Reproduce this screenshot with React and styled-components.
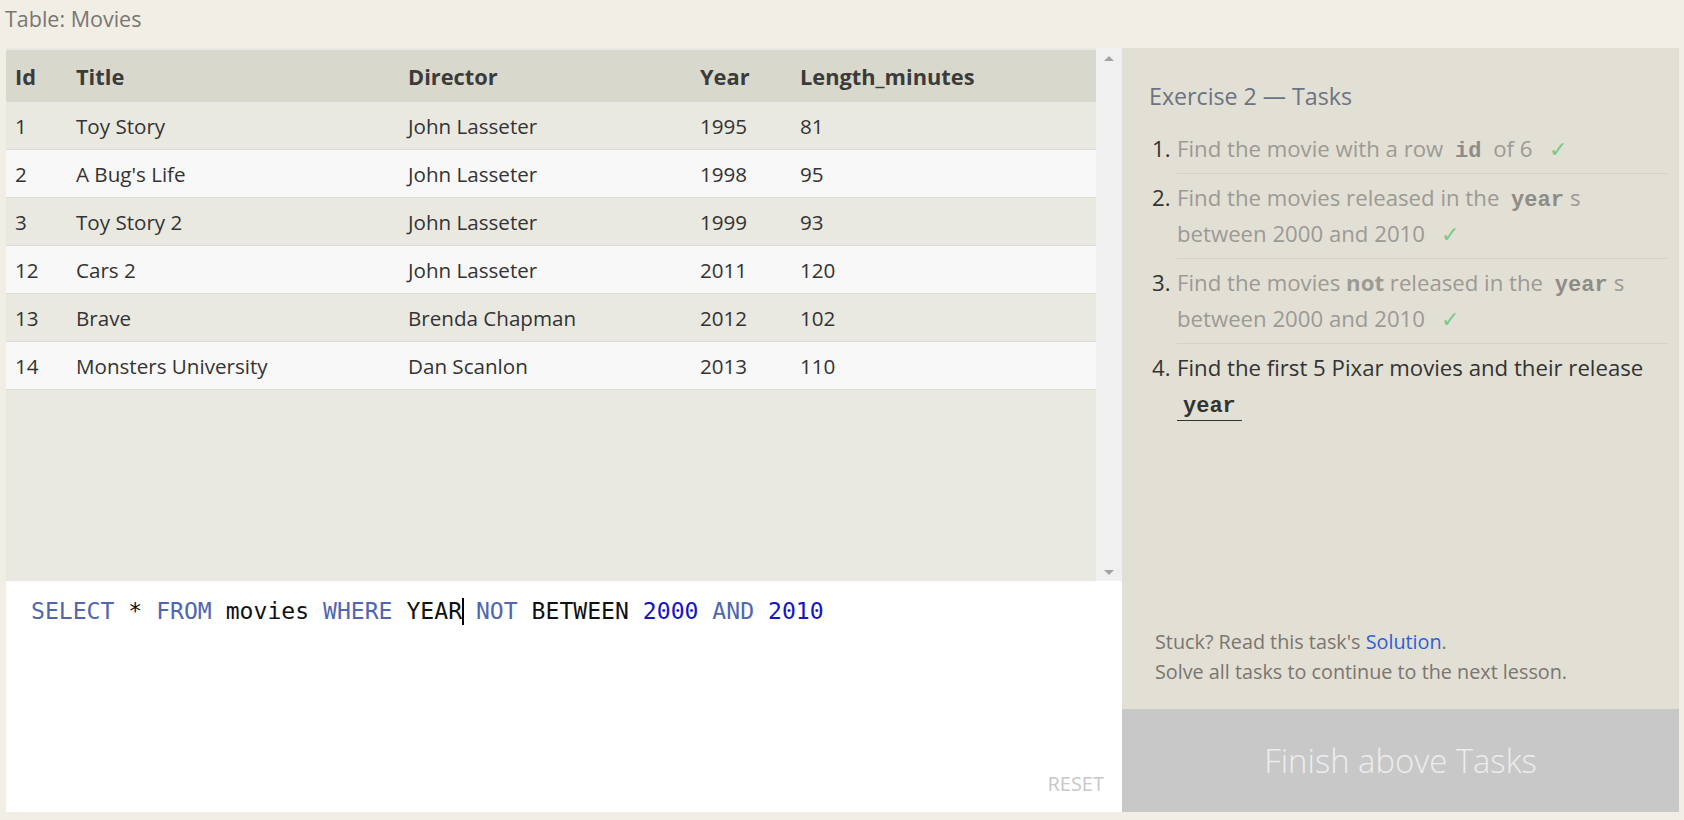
import React from "react";
import styled, { createGlobalStyle } from "styled-components";

const GlobalStyle = createGlobalStyle`
  html, body {
    margin: 0;
    padding: 0;
    background: #f1eee6;
  }
  body {
    font-family: "Open Sans", "Noto Sans", sans-serif;
    color: #333;
  }
`;

const movies = [
  { id: 1, title: "Toy Story", director: "John Lasseter", year: 1995, length: 81 },
  { id: 2, title: "A Bug's Life", director: "John Lasseter", year: 1998, length: 95 },
  { id: 3, title: "Toy Story 2", director: "John Lasseter", year: 1999, length: 93 },
  { id: 12, title: "Cars 2", director: "John Lasseter", year: 2011, length: 120 },
  { id: 13, title: "Brave", director: "Brenda Chapman", year: 2012, length: 102 },
  { id: 14, title: "Monsters University", director: "Dan Scanlon", year: 2013, length: 110 },
];

const columns = [
  { key: "id", label: "Id", width: 61 },
  { key: "title", label: "Title", width: 332 },
  { key: "director", label: "Director", width: 292 },
  { key: "year", label: "Year", width: 100 },
  { key: "length", label: "Length_minutes", width: 305 },
];

const Page = styled.div`
  display: flex;
  flex-direction: column;
  height: 820px;
  padding: 0 5px 8px 6px;
  box-sizing: border-box;
`;

const TableName = styled.div`
  height: 48px;
  padding-top: 5px;
  box-sizing: border-box;
  font-size: 21.5px;
  line-height: 28px;
  color: #7a7672;
  margin-left: -1px;
`;

const Main = styled.div`
  flex: 1;
  display: flex;
  min-height: 0;
`;

const LeftColumn = styled.div`
  width: 1116px;
  display: flex;
  flex-direction: column;
`;

const TableArea = styled.div`
  height: 533px;
  display: flex;
  background: #eae9e1;
`;

const TableScroll = styled.div`
  flex: 1;
  padding-top: 2px;
  overflow: hidden;
`;

const Table = styled.table`
  border-collapse: collapse;
  table-layout: fixed;
  width: 100%;
  font-size: 20.6px;
`;

const HeadCell = styled.th`
  height: 52px;
  padding: 0 0 0 9px;
  text-align: left;
  font-size: 21.8px;
  font-weight: 700;
  color: #3b3b3b;
  background: #d9d8cc;
`;

const Row = styled.tr`
  background: ${(p) => (p.$even ? "#f8f8f8" : "#eae9e1")};
  border-bottom: 1px solid #dcdbd4;
`;

const Cell = styled.td`
  height: 47px;
  padding: 0 0 0 9px;
  color: #333;
  white-space: nowrap;
`;

const Scrollbar = styled.div`
  width: 26px;
  background: #f0f0f0;
  display: flex;
  flex-direction: column;
  justify-content: space-between;
  align-items: center;
  padding: 8px 0 6px;
  box-sizing: border-box;
`;

const Arrow = styled.div`
  width: 0;
  height: 0;
  border-left: 5px solid transparent;
  border-right: 5px solid transparent;
  ${(p) =>
    p.$down
      ? "border-top: 5px solid #a3a3a3;"
      : "border-bottom: 5px solid #a3a3a3;"}
`;

const Editor = styled.div`
  flex: 1;
  background: #fff;
  display: flex;
  flex-direction: column;
  padding: 15px 18px 15px 25px;
  box-sizing: border-box;
`;

const Code = styled.div`
  font-family: "DejaVu Sans Mono", "Liberation Mono", monospace;
  font-size: 23.1px;
  line-height: 30px;
  color: #000;
  white-space: pre;
  flex: 1;
`;

const Token = styled.span`
  color: ${(p) => (p.$kind === "kw" ? "#5266b0" : p.$kind === "num" ? "#1414c8" : "#111")};
`;

const Caret = styled.span`
  display: inline-block;
  width: 0;
  height: 27px;
  border-left: 2px solid #000;
  margin-right: -2px;
  vertical-align: -6px;
`;

const ResetButton = styled.div`
  align-self: flex-end;
  font-size: 20px;
  color: #c8c8c8;
`;

const RightColumn = styled.div`
  flex: 1;
  display: flex;
  flex-direction: column;
  background: #e2dfd4;
`;

const TaskPanel = styled.div`
  flex: 1;
  padding: 33px 12px 0 30px;
`;

const TaskTitle = styled.div`
  font-size: 23.2px;
  line-height: 31px;
  color: #6b7384;
  margin: 0 0 13px -3px;
`;

const TaskList = styled.ol`
  list-style: none;
  margin: 0;
  padding: 0;
`;

const TaskItem = styled.li`
  display: flex;
  font-size: 22.2px;
  line-height: 36px;
`;

const TaskNum = styled.span`
  width: 25px;
  flex: none;
  padding-top: 6px;
  color: #333;
`;

const TaskBody = styled.div`
  flex: 1;
  padding: 6px 0;
  color: ${(p) => (p.$done ? "#9c9a94" : "#333")};
  border-bottom: ${(p) => (p.$last ? "none" : "1px solid #d4d1c6")};
`;

const InlineCode = styled.code`
  font-family: "Liberation Mono", "DejaVu Sans Mono", monospace;
  font-size: 22px;
  line-height: 1;
  font-weight: 700;
  padding: 0 6px;
  color: ${(p) => (p.$current ? "#333" : "#8e8c87")};
  ${(p) => (p.$current ? "border-bottom: 1px solid #333; padding-bottom: 1px;" : "")}
`;

const Check = styled.span`
  color: #78c98a;
  margin-left: 16px;
  line-height: 1;
`;

const Footer = styled.div`
  padding: 0 20px 22px 33px;
  font-size: 19.8px;
  line-height: 30px;
  color: #7a7570;
`;

const SolutionLink = styled.a`
  color: #2d5fd5;
  text-decoration: none;
`;

const FinishButton = styled.div`
  height: 103px;
  background: #c8c8c8;
  color: #ededed;
  font-size: 32.8px;
  font-weight: 300;
  display: flex;
  align-items: center;
  justify-content: center;
`;

const tokens = [
  ["kw", "SELECT"], ["", " * "], ["kw", "FROM"], ["", " movies "], ["kw", "WHERE"],
  ["", " YEAR"], ["caret", ""], ["", " "], ["kw", "NOT"], ["", " BETWEEN "],
  ["num", "2000"], ["", " "], ["kw", "AND"], ["", " "], ["num", "2010"],
];

export default function App() {
  return (
    <>
      <GlobalStyle />
      <Page>
        <TableName>Table: Movies</TableName>
        <Main>
          <LeftColumn>
            <TableArea>
              <TableScroll>
                <Table>
                  <colgroup>
                    {columns.map((c) => (
                      <col key={c.key} style={{ width: c.width }} />
                    ))}
                  </colgroup>
                  <thead>
                    <tr>
                      {columns.map((c) => (
                        <HeadCell key={c.key}>{c.label}</HeadCell>
                      ))}
                    </tr>
                  </thead>
                  <tbody>
                    {movies.map((m, i) => (
                      <Row key={m.id} $even={i % 2 === 1}>
                        {columns.map((c) => (
                          <Cell key={c.key}>{m[c.key]}</Cell>
                        ))}
                      </Row>
                    ))}
                  </tbody>
                </Table>
              </TableScroll>
              <Scrollbar>
                <Arrow />
                <Arrow $down />
              </Scrollbar>
            </TableArea>
            <Editor>
              <Code>
                {tokens.map(([kind, text], i) =>
                  kind === "caret" ? (
                    <Caret key={i} />
                  ) : (
                    <Token key={i} $kind={kind}>
                      {text}
                    </Token>
                  )
                )}
              </Code>
              <ResetButton>RESET</ResetButton>
            </Editor>
          </LeftColumn>
          <RightColumn>
            <TaskPanel>
              <TaskTitle>Exercise 2 — Tasks</TaskTitle>
              <TaskList>
                <TaskItem>
                  <TaskNum>1.</TaskNum>
                  <TaskBody $done>
                    Find the movie with a row <InlineCode>id</InlineCode> of 6
                    <Check>✓</Check>
                  </TaskBody>
                </TaskItem>
                <TaskItem>
                  <TaskNum>2.</TaskNum>
                  <TaskBody $done>
                    Find the movies released in the <InlineCode>year</InlineCode>s
                    between 2000 and 2010<Check>✓</Check>
                  </TaskBody>
                </TaskItem>
                <TaskItem>
                  <TaskNum>3.</TaskNum>
                  <TaskBody $done>
                    Find the movies <b>not</b> released in the{" "}
                    <InlineCode>year</InlineCode>s between 2000 and 2010
                    <Check>✓</Check>
                  </TaskBody>
                </TaskItem>
                <TaskItem>
                  <TaskNum>4.</TaskNum>
                  <TaskBody $last>
                    Find the first 5 Pixar movies and their release{" "}
                    <InlineCode $current>year</InlineCode>
                  </TaskBody>
                </TaskItem>
              </TaskList>
            </TaskPanel>
            <Footer>
              Stuck? Read this task's <SolutionLink href="#">Solution</SolutionLink>.
              <br />
              Solve all tasks to continue to the next lesson.
            </Footer>
            <FinishButton>Finish above Tasks</FinishButton>
          </RightColumn>
        </Main>
      </Page>
    </>
  );
}
